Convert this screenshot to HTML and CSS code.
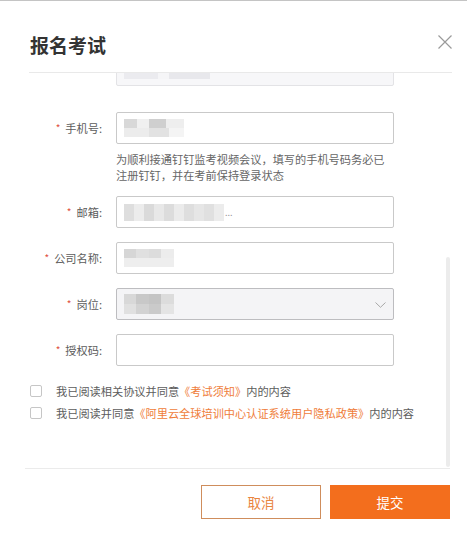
FILE: index.html
```html
<!DOCTYPE html>
<html lang="zh-CN">
<head>
<meta charset="utf-8">
<title>报名考试</title>
<link rel="stylesheet" href="styles.css">
</head>
<body>
<div class="modal">
  <div class="modal-header">
    <h1 class="modal-title">报名考试</h1>
    <button class="close-btn" aria-label="关闭">
      <svg width="14" height="14" viewBox="0 0 14 14"><path d="M0.5 0.5 L13.5 13.5 M13.5 0.5 L0.5 13.5" stroke="#9a9a9a" stroke-width="1.2" fill="none"/></svg>
    </button>
  </div>
  <div class="modal-body">
    <div class="scroll-content">
      <div class="form-row row-first">
        <div class="form-label"></div>
        <div class="field">
          <div class="input input-disabled"><span class="mosaic mosaic-first"></span></div>
        </div>
      </div>
      <div class="form-row">
        <div class="form-label"><span class="req">*</span>手机号:</div>
        <div class="field">
          <div class="input"><span class="mosaic mosaic-phone"></span></div>
          <p class="hint">为顺利接通钉钉监考视频会议，填写的手机号码务必已注册钉钉，并在考前保持登录状态</p>
        </div>
      </div>
      <div class="form-row">
        <div class="form-label"><span class="req">*</span>邮箱:</div>
        <div class="field">
          <div class="input"><span class="mosaic mosaic-mail"></span><span class="ellipsis">...</span></div>
        </div>
      </div>
      <div class="form-row">
        <div class="form-label"><span class="req">*</span>公司名称:</div>
        <div class="field">
          <div class="input"><span class="mosaic mosaic-company"></span></div>
        </div>
      </div>
      <div class="form-row">
        <div class="form-label"><span class="req">*</span>岗位:</div>
        <div class="field">
          <div class="input input-select"><span class="mosaic mosaic-post"></span>
            <svg class="chevron" width="11" height="6" viewBox="0 0 11 6"><path d="M0.5 0.5 L5.5 5.3 L10.5 0.5" stroke="#a8a8a8" stroke-width="1" fill="none"/></svg>
          </div>
        </div>
      </div>
      <div class="form-row">
        <div class="form-label"><span class="req">*</span>授权码:</div>
        <div class="field">
          <div class="input"></div>
        </div>
      </div>
      <div class="agreements">
        <label class="check-row"><span class="checkbox"></span><span class="check-text">我已阅读相关协议并同意<a class="link">《考试须知》</a>内的内容</span></label>
        <label class="check-row"><span class="checkbox"></span><span class="check-text">我已阅读并同意<a class="link">《阿里云全球培训中心认证系统用户隐私政策》</a>内的内容</span></label>
      </div>
    </div>
    <div class="scrollbar"></div>
  </div>
  <div class="modal-footer">
    <button class="btn btn-cancel">取消</button>
    <button class="btn btn-submit">提交</button>
  </div>
</div>
</body>
</html>
```

FILE: styles.css
```css
* { box-sizing: border-box; }
html, body { margin: 0; padding: 0; background: #fff; }
body {
  font-family: "Noto Sans CJK SC", "Noto Sans", sans-serif;
  font-size: 11.2px;
  color: #5c5c5c;
  width: 467px;
  height: 536px;
  overflow: hidden;
}
.modal {
  border-top: 1px solid #c4c4c4;
}
.modal-header {
  display: flex;
  justify-content: space-between;
  align-items: flex-start;
  height: 72px;
  padding-top: 31px;
  margin: 0 15px 0 29px;
  border-bottom: 1px solid #e9e9e9;
}
.modal-title {
  margin: 0 0 0 1px;
  font-size: 19px;
  line-height: 26px;
  font-weight: 700;
  color: #333;
}
.close-btn {
  margin: 3px 0 0;
  padding: 0;
  border: 0;
  background: none;
  width: 14px;
  height: 14px;
  line-height: 0;
}
.modal-body {
  position: relative;
  height: 395px;
  overflow: hidden;
}
.scroll-content {
  margin-top: -19px;
}
.form-row {
  display: flex;
  align-items: flex-start;
  margin-bottom: 13px;
}
.form-row.row-first { margin-bottom: 26px; }
.form-label {
  flex: 0 0 102px;
  text-align: right;
  line-height: 32px;
  color: #5c5c5c;
  white-space: nowrap;
}
.req {
  color: #e0513f;
  font-size: 10px;
  margin-right: 5px;
  position: relative;
  top: -1px;
}
.field {
  margin-left: 14px;
  width: 278px;
}
.input {
  position: relative;
  height: 32px;
  border: 1px solid #c9c9c9;
  border-radius: 2px;
  background: #fff;
  display: flex;
  align-items: center;
  padding-left: 7px;
}
.input-disabled {
  background: #f7f7f9;
  border-color: #e3e3e6;
  align-items: flex-end;
  padding-bottom: 6px;
}
.input-select {
  background: #f4f4f6;
  border-color: #bdbdc0;
}
.chevron {
  position: absolute;
  right: 7px;
  top: 13px;
}
.hint {
  margin: 0;
  padding-top: 7px;
  line-height: 16px;
  color: #666;
}
.mosaic {
  display: inline-block;
  filter: blur(0.6px);
}
.mosaic-first {
  width: 86px;
  height: 7px;
  background: linear-gradient(90deg, #ebebef 0 40%, #f5f5f7 40% 52%, #e8e8ec 52% 100%);
}
.mosaic-phone {
  width: 60px;
  height: 18px;
  background:
    linear-gradient(90deg, #d8d8d8 0 22%, #f0f0f0 22% 42%, #cfcfcf 42% 70%, #eeeeee 70% 100%) top / 100% 50% no-repeat,
    linear-gradient(90deg, #ececec 0 42%, #e2e2e2 42% 75%, #f4f4f4 75% 100%) bottom / 100% 50% no-repeat;
}
.mosaic-mail {
  width: 100px;
  height: 17px;
  background:
    linear-gradient(90deg, #dedede 0 10%, #ececec 10% 20%, #dadada 20% 30%, #e8e8e8 30% 40%, #dcdcdc 40% 50%, #ebebeb 50% 60%, #dedede 60% 70%, #e6e6e6 70% 80%, #e0e0e0 80% 90%, #ececec 90% 100%);
}
.ellipsis {
  color: #999;
  font-size: 9px;
  margin-left: 1px;
}
.mosaic-company {
  width: 50px;
  height: 18px;
  background:
    linear-gradient(90deg, #d6d6d6 0 25%, #e0e0e0 25% 50%, #dcdcdc 50% 75%, #ececec 75% 100%) top / 100% 50% no-repeat,
    linear-gradient(90deg, #eeeeee 0 100%) bottom / 100% 50% no-repeat;
}
.mosaic-post {
  width: 50px;
  height: 20px;
  background:
    linear-gradient(90deg, #d8d8d8 0 25%, #c8c8c8 25% 50%, #c4c4c4 50% 75%, #dcdcdc 75% 100%) top / 100% 50% no-repeat,
    linear-gradient(90deg, #e0e0e0 0 25%, #d2d2d2 25% 50%, #cacaca 50% 75%, #e4e4e4 75% 100%) bottom / 100% 50% no-repeat;
}
.agreements {
  margin-top: 3px;
  padding-left: 30px;
}
.check-row {
  display: flex;
  align-items: center;
  height: 22px;
}
.checkbox {
  flex: 0 0 12px;
  width: 12px;
  height: 12px;
  border: 1px solid #c6c6c6;
  border-radius: 2px;
  background: #fff;
}
.check-text {
  margin-left: 14px;
  color: #5c5c5c;
  white-space: nowrap;
}
.link {
  color: #ef7d3a;
}
.scrollbar {
  position: absolute;
  left: 446px;
  top: 184px;
  width: 4px;
  height: 210px;
  background: #ececec;
  border-radius: 2px;
}
.modal-footer {
  display: flex;
  justify-content: flex-end;
  gap: 9px;
  margin: 0 17px 0 25px;
  padding-top: 16px;
  border-top: 1px solid #ebebeb;
}
.btn {
  width: 120px;
  height: 34px;
  font-family: "Noto Sans CJK SC", "Noto Sans", sans-serif;
  font-size: 13.5px;
  border-radius: 0;
  padding: 0;
}
.btn-cancel {
  background: #fff;
  border: 1px solid #cf8d5c;
  color: #e9853f;
}
.btn-submit {
  background: #f36e1d;
  border: 1px solid #f36e1d;
  color: #fff;
}
```
